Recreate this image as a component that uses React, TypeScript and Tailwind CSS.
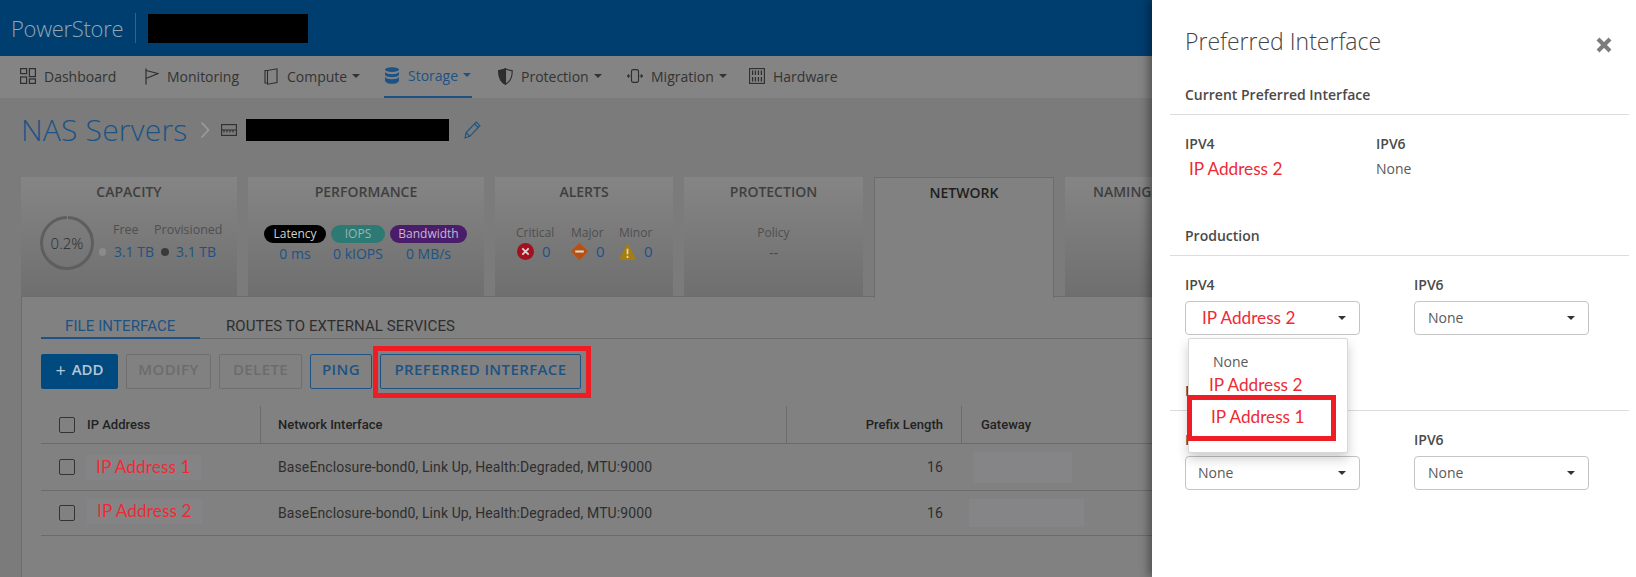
import React from "react";

const FieldLabel = ({ children }: { children: React.ReactNode }) => (
  <div className="mt-[19px] h-5 text-[14px] font-semibold leading-5 text-[#4a4a4a]">{children}</div>
);

const Caret = ({ className = "" }: { className?: string }) => (
  <span className={`inline-block h-0 w-0 border-x-[4px] border-t-[4px] border-x-transparent border-t-current ${className}`} />
);

const RedText = ({ children, className = "" }: { children: React.ReactNode; className?: string }) => (
  <span className={`font-['Lato',sans-serif] text-[17.2px] text-[#ee2a35] ${className}`}>{children}</span>
);

const SelectBox = ({ children, pad }: { children: React.ReactNode; pad: string }) => (
  <div className={`mt-[6px] flex h-[34px] w-[175px] items-center justify-between rounded-[4px] border border-[#c4c4c4] bg-white pr-[13px] text-[14px] text-[#5a5a5a] ${pad}`}>
    <span className="-mt-px">{children}</span>
    <Caret className="text-[#333]" />
  </div>
);

const SectionHead = ({ children, className = "" }: { children: React.ReactNode; className?: string }) => (
  <div className={`ml-[18px] mr-[7px] h-[30px] border-b border-[#dcdcdc] pl-[15px] text-[14px] font-semibold leading-5 text-[#4a4a4a] ${className}`}>
    {children}
  </div>
);

function DashIcon() {
  return (
    <svg width="16" height="16" viewBox="0 0 16 16" fill="none" stroke="#2e2e2e" strokeWidth="1.2">
      <rect x="0.6" y="0.6" width="6" height="5" />
      <rect x="9.4" y="0.6" width="6" height="8" />
      <rect x="0.6" y="9" width="6" height="6.4" />
      <rect x="9.4" y="11" width="6" height="4.4" />
    </svg>
  );
}

function FlagIcon() {
  return (
    <svg width="15" height="17" viewBox="0 0 15 17" fill="none" stroke="#2e2e2e" strokeWidth="1.2">
      <path d="M2 0.5V16.5" />
      <path d="M2 2.5L14 5.5L2 10.5" />
    </svg>
  );
}

function ComputeIcon() {
  return (
    <svg width="14" height="17" viewBox="0 0 14 17" fill="none" stroke="#2e2e2e" strokeWidth="1.1">
      <path d="M3.5 2.5L13 0.8V14.6L3.5 16.2Z" />
      <path d="M3.5 2.5H1V15H3.5" />
    </svg>
  );
}

function StorageIcon() {
  return (
    <svg width="14" height="17" viewBox="0 0 14 17" fill="#1c5384">
      <ellipse cx="7" cy="2.6" rx="7" ry="2.4" />
      <path d="M0 5C1 6.6 4 7.2 7 7.2S13 6.6 14 5V8C13 9.6 10 10.2 7 10.2S1 9.6 0 8Z" />
      <path d="M0 10C1 11.6 4 12.2 7 12.2S13 11.6 14 10V14C13 16 10 16.8 7 16.8S1 16 0 14Z" />
    </svg>
  );
}

function ShieldIcon() {
  return (
    <svg width="15" height="17" viewBox="0 0 15 17" stroke="#2e2e2e" strokeWidth="1.1">
      <path d="M7.5 0.8C9.5 2 12 2.6 14.2 2.6C14.4 9 12 13.8 7.5 16.2C3 13.8 0.6 9 0.8 2.6C3 2.6 5.5 2 7.5 0.8Z" fill="none" />
      <path d="M7.5 0.8C5.5 2 3 2.6 0.8 2.6C0.6 9 3 13.8 7.5 16.2Z" fill="#2e2e2e" />
    </svg>
  );
}

function MigrationIcon() {
  return (
    <svg width="16" height="14" viewBox="0 0 16 14" fill="none" stroke="#2e2e2e" strokeWidth="1.1">
      <path d="M4.5 2.5C4.5 1 5.5 0.6 6.5 0.6H9.5C10.5 0.6 11.5 1 11.5 2.5V11.5C11.5 13 10.5 13.4 9.5 13.4H6.5C5.5 13.4 4.5 13 4.5 11.5Z" />
      <path d="M0.5 7H3.5M2 5.4L0.5 7L2 8.6M12.5 7H15.5M14 5.4L15.5 7L14 8.6" />
    </svg>
  );
}

function HardwareIcon() {
  return (
    <svg width="16" height="16" viewBox="0 0 16 16" fill="none" stroke="#2e2e2e" strokeWidth="1.1">
      <rect x="0.6" y="0.6" width="14.8" height="14.8" />
      <path d="M3.6 2.5V7M6.4 2.5V7M9.4 2.5V7M12.4 2.5V7M3.6 9V13.5M6.4 9V13.5M9.4 9V13.5M12.4 9V13.5" strokeWidth="1.3" />
    </svg>
  );
}

const navItems = [
  { label: "Dashboard", icon: <DashIcon />, width: "w-[123px]" },
  { label: "Monitoring", icon: <FlagIcon />, width: "w-[120px]" },
  { label: "Compute", icon: <ComputeIcon />, width: "w-[121px]", caret: true },
  { label: "Storage", icon: <StorageIcon />, width: "w-[113px]", caret: true, active: true },
  { label: "Protection", icon: <ShieldIcon />, width: "w-[130px]", caret: true },
  { label: "Migration", icon: <MigrationIcon />, width: "w-[122px]", caret: true },
  { label: "Hardware", icon: <HardwareIcon />, width: "w-[100px]" },
];

const Card = ({ title, children, className = "" }: { title: string; children?: React.ReactNode; className?: string }) => (
  <div className={`h-[119px] shrink-0 bg-gradient-to-b from-[#858585] to-[#6f6f6f] pt-[5px] ${className}`}>
    <div className="h-5 whitespace-nowrap text-center text-[14px] font-semibold uppercase leading-5 text-[#3f3f3f]">{title}</div>
    {children}
  </div>
);

function Alert({ label, icon, className }: { label: string; icon: React.ReactNode; className: string }) {
  return (
    <div className={className}>
      <div className="h-5 text-[12px] leading-5 text-[#4f4f4f]">{label}</div>
      <div className="-mt-[2px] flex h-5 items-center gap-[8px] text-[15px] text-[#1c5384]">
        {icon}
        <span>0</span>
      </div>
    </div>
  );
}

const ActionButton = ({ children, width, disabled }: { children: React.ReactNode; width: string; disabled?: boolean }) => (
  <button
    className={`h-[35px] rounded-[2px] border pb-[4px] text-[15px] font-semibold tracking-[0.4px] ${width} ${
      disabled ? "border-[#6f6f6f] text-[#6c6c6c]" : "border-[#1c5384] text-[#1c5384]"
    }`}
  >
    {children}
  </button>
);

const CheckBox = () => <span className="block h-[16px] w-[16px] rounded-[2px] border border-[#333]" />;

const ipRow = "grid grid-cols-[220px_526px_175px_1fr] items-center border-b border-[#6b6b6b] font-['Roboto',sans-serif] text-[14px] tracking-[0.1px] text-[#2e2e2e]";

export default function App() {
  return (
    <div className="relative h-[577px] w-[1636px] overflow-hidden bg-[#7b7b7b] font-['Open_Sans',sans-serif]">
      {/* top bar */}
      <header className="flex h-14 items-center bg-[#003e6f] pl-[11px]">
        <span className="text-[22px] font-light leading-none tracking-[-0.3px] text-[#8fa5b4]">PowerStore</span>
        <span className="ml-3 h-[30px] w-px bg-[#33648c]" />
        <span className="ml-3 h-[29px] w-[160px] bg-black" />
      </header>

      <nav className="flex h-[42px] items-stretch bg-[#848484] pl-[20px] text-[14px] text-[#333]">
        {navItems.map((item) => (
          <div key={item.label} className={`flex ${item.width}`}>
            <div className={`flex items-center gap-2 pb-[2px] pr-px ${item.active ? "border-b-2 border-[#1c5384] text-[#1c5384]" : ""}`}>
              <span className="flex w-4 justify-center">{item.icon}</span>
              <span>{item.label}</span>
              {item.caret && <Caret className="-ml-[3px]" />}
            </div>
          </div>
        ))}
      </nav>

      {/* page title */}
      <div className="mt-3 flex h-10 items-center pl-[21px]">
        <h1 className="text-[30px] font-light leading-none tracking-[0.2px] text-[#1c5384]">NAS Servers</h1>
        <svg className="ml-[13px]" width="10" height="18" viewBox="0 0 10 18" fill="none" stroke="#9a9a9a" strokeWidth="1.8">
          <path d="M1.5 1.5L8.5 9L1.5 16.5" />
        </svg>
        <svg className="ml-[11px]" width="16" height="12" viewBox="0 0 16 12" fill="none" stroke="#2e2e2e" strokeWidth="1.1">
          <rect x="0.6" y="0.6" width="14.8" height="10.8" />
          <path d="M0.6 6H15.4M3 6V8.5M6 6V8.5M9 6V8.5M12 6V8.5" />
        </svg>
        <span className="ml-[9px] h-[22px] w-[203px] bg-black" />
        <svg className="ml-[15px]" width="17" height="18" viewBox="0 0 16 17" fill="none" stroke="#1c5384" strokeWidth="1.1">
          <path d="M1 16L2 11L11.5 1L15 4.5L5.5 14.5Z" />
          <path d="M2 11L5.5 14.5M10 3L13.5 6.5" />
        </svg>
      </div>

      {/* summary cards */}
      <div className="mt-[27px] flex h-[119px] gap-[11px] pl-[21px]">
        <Card title="Capacity" className="w-[216px]">
          <div className="mt-[14px] flex pl-[19px]">
            <div className="relative flex h-[54px] w-[54px] items-center justify-center">
              <svg className="absolute inset-0" width="54" height="54" viewBox="0 0 54 54" fill="none">
                <circle cx="27" cy="27" r="25.5" stroke="#5e5e5e" strokeWidth="3" strokeDasharray="158 2.2" transform="rotate(-88 27 27)" />
              </svg>
              <span className="text-[15px] font-light text-[#2a2a2a]">0.2%</span>
            </div>
            <div className="ml-[5px] flex text-[12.5px]">
              <div className="w-[55px]">
                <div className="ml-[14px] mt-[4px] h-5 leading-5 text-[#4f4f4f]">Free</div>
                <div className="mt-[1px] flex items-center gap-2">
                  <span className="h-2 w-2 rounded-full bg-[#8b8b8b]" />
                  <span className="whitespace-nowrap text-[14px] text-[#1c5384]">3.1 TB</span>
                </div>
              </div>
              <div>
                <div className="mt-[4px] h-5 leading-5 text-[#4f4f4f]">Provisioned</div>
                <div className="ml-[7px] mt-[1px] flex items-center gap-[7px]">
                  <span className="h-2 w-2 rounded-full bg-[#3a3a3a]" />
                  <span className="whitespace-nowrap text-[14px] text-[#1c5384]">3.1 TB</span>
                </div>
              </div>
            </div>
          </div>
        </Card>

        <Card title="Performance" className="w-[236px]">
          <div className="mt-[23px] flex gap-[5px] pl-4 text-center">
            <div className="w-[62px]">
              <div className="h-[18px] rounded-full bg-black text-[12px] leading-[18px] text-[#d0d0d0]">Latency</div>
              <div className="mt-px text-[14px] leading-5 text-[#1c5384]">0 ms</div>
            </div>
            <div className="w-[54px]">
              <div className="h-[18px] rounded-full bg-[#2c7a73] text-[12px] leading-[18px] text-[#9ab5b2]">IOPS</div>
              <div className="mt-px whitespace-nowrap text-[14px] leading-5 text-[#1c5384]">0 kIOPS</div>
            </div>
            <div className="w-[77px]">
              <div className="h-[18px] rounded-full bg-[#4a1d6b] text-[12px] leading-[18px] text-[#c6b6d2]">Bandwidth</div>
              <div className="mt-px text-[14px] leading-5 text-[#1c5384]">0 MB/s</div>
            </div>
          </div>
        </Card>

        <Card title="Alerts" className="w-[178px]">
          <div className="mt-[21px] flex pl-[21px]">
            <Alert
              label="Critical"
              className="w-[55px]"
              icon={
                <svg className="ml-[1px] shrink-0" width="17" height="17" viewBox="0 0 16 16">
                  <circle cx="8" cy="8" r="8" fill="#a5101f" />
                  <path d="M5 5L11 11M11 5L5 11" stroke="#d8d8d8" strokeWidth="1.7" />
                </svg>
              }
            />
            <Alert
              label="Major"
              className="w-[48px]"
              icon={
                <svg className="shrink-0" width="17" height="17" viewBox="0 0 16 16">
                  <path d="M8 0L16 8L8 16L0 8Z" fill="#b9500f" />
                  <path d="M4 8H12" stroke="#d8d8d8" strokeWidth="2" />
                </svg>
              }
            />
            <Alert
              label="Minor"
              className="w-[48px]"
              icon={
                <svg className="shrink-0" width="17" height="17" viewBox="0 0 16 16">
                  <path d="M8 0L16 16H0Z" fill="#a87e0a" />
                  <path d="M8 5.5V10.5M8 12V14" stroke="#d8d8d8" strokeWidth="1.6" />
                </svg>
              }
            />
          </div>
        </Card>

        <Card title="Protection" className="w-[179px]">
          <div className="mt-[21px] text-center">
            <div className="h-5 text-[12px] leading-5 text-[#4f4f4f]">Policy</div>
            <div className="h-5 text-[14px] leading-5 text-[#1c5384]">--</div>
          </div>
        </Card>

        <div className="relative z-10 h-[121px] w-[180px] shrink-0 border-x border-t border-[#6d6d6d] bg-[#818181] pt-[5px]">
          <div className="h-5 text-center text-[14px] font-semibold uppercase leading-5 text-[#1e1e1e]">Network</div>
        </div>

        <Card title="Naming Services" className="w-[180px]" />
      </div>

      {/* network section */}
      <section className="ml-[21px] h-[281px] border-l border-t border-[#6d6d6d] bg-[#818181] pl-[19px]">
        <div className="flex h-[42px] border-b border-[#6b6b6b] font-['Roboto',sans-serif] text-[15px] leading-5 tracking-[0.1px]">
          <div className="-mb-px w-[159px] border-b-2 border-[#1c5384] pl-6 pt-[19px] text-[#1c5384]">FILE INTERFACE</div>
          <div className="ml-[26px] pt-[19px] text-[#2e2e2e]">ROUTES TO EXTERNAL SERVICES</div>
        </div>

        <div className="mt-[15px] flex gap-2">
          <button className="flex h-[35px] w-[77px] items-center justify-center gap-[6px] rounded-[2px] bg-[#004a80] pb-[4px] text-[15px] font-semibold text-[#b7c6d2]">
            <span className="text-[18px] font-normal leading-none">+</span> ADD
          </button>
          <ActionButton width="w-[85px]" disabled>MODIFY</ActionButton>
          <ActionButton width="w-[83px]" disabled>DELETE</ActionButton>
          <ActionButton width="w-[62px]">PING</ActionButton>
          <ActionButton width="w-[201px]">PREFERRED INTERFACE</ActionButton>
        </div>

        <div className="mt-[17px]">
          <div className="grid h-[38px] grid-cols-[220px_526px_175px_1fr] border-b border-[#6b6b6b] font-['Roboto',sans-serif] text-[13px] font-medium text-[#222]">
            <div className="flex items-center gap-3 border-r border-[#6b6b6b] pl-[18px]">
              <CheckBox />
              <span>IP Address</span>
            </div>
            <div className="flex items-center border-r border-[#6b6b6b] pl-[17px]">Network Interface</div>
            <div className="flex items-center justify-end border-r border-[#6b6b6b] pr-[18px]">Prefix Length</div>
            <div className="flex items-center pl-[19px]">Gateway</div>
          </div>

          <div className={`${ipRow} h-[47px]`}>
            <div className="flex items-center pl-[18px]">
              <CheckBox />
              <span className="ml-[11px] bg-[#848486] px-[10px] leading-[23px]">
                <RedText>IP Address 1</RedText>
              </span>
            </div>
            <div className="pl-[17px]">BaseEnclosure-bond0, Link Up, Health:Degraded, MTU:9000</div>
            <div className="pr-[19px] text-right">16</div>
            <div className="pl-[11px]">
              <div className="h-[31px] w-[99px] bg-[#858588]" />
            </div>
          </div>
          <div className={`${ipRow} h-[45px]`}>
            <div className="flex items-center pl-[18px]">
              <CheckBox />
              <span className="mb-[3px] ml-[12px] bg-[#848486] px-[10px] leading-[23px]">
                <RedText>IP Address 2</RedText>
              </span>
            </div>
            <div className="pl-[17px]">BaseEnclosure-bond0, Link Up, Health:Degraded, MTU:9000</div>
            <div className="pr-[19px] text-right">16</div>
            <div className="pl-[7px]">
              <div className="h-[28px] w-[115px] bg-[#858588]" />
            </div>
          </div>
        </div>
      </section>

      {/* annotation over the button */}
      <div className="absolute left-[373px] top-[346px] h-[52px] w-[218px] border-[5px] border-[#ee1c25]" />

      {/* preferred interface drawer */}
      <aside className="absolute bottom-0 left-[1152px] top-0 w-[484px] bg-white shadow-[-4px_0_8px_rgba(0,0,0,0.35)]">
        <h2 className="pl-[33px] pt-[26px] text-[23px] font-light leading-[30px] text-[#444]">Preferred Interface</h2>
        <svg className="absolute left-[444px] top-[37px]" width="16" height="16" viewBox="0 0 16 16" fill="none" stroke="#7c7c7c" strokeWidth="4">
          <path d="M2 2L14 14M14 2L2 14" />
        </svg>

        <SectionHead className="mt-[29px]">Current Preferred Interface</SectionHead>
        <div className="grid grid-cols-[191px_1fr] pl-[33px]">
          <FieldLabel>IPV4</FieldLabel>
          <FieldLabel>IPV6</FieldLabel>
          <div className="mt-[3px] h-6 pl-1 leading-6">
            <RedText>IP Address 2</RedText>
          </div>
          <div className="mt-[3px] h-6 text-[14px] leading-6 text-[#5a5a5a]">None</div>
        </div>

        <SectionHead className="mt-[45px]">Production</SectionHead>
        <div className="grid grid-cols-[229px_1fr] pl-[33px]">
          <FieldLabel>IPV4</FieldLabel>
          <FieldLabel>IPV6</FieldLabel>
          <SelectBox pad="pl-4"><RedText>IP Address 2</RedText></SelectBox>
          <SelectBox pad="pl-[13px]">None</SelectBox>
        </div>

        <SectionHead className="mt-[46px]">File</SectionHead>
        <div className="grid grid-cols-[229px_1fr] pl-[33px]">
          <FieldLabel>IPV4</FieldLabel>
          <FieldLabel>IPV6</FieldLabel>
          <SelectBox pad="pl-[12px]">None</SelectBox>
          <SelectBox pad="pl-[13px]">None</SelectBox>
        </div>

        {/* open dropdown */}
        <div className="absolute left-[36px] top-[338px] h-[115px] w-[160px] rounded-[2px] border border-[#d8d8d8] bg-white pt-[12px] shadow-[0_6px_12px_rgba(0,0,0,0.2)]">
          <div className="h-[22px] pl-6 text-[14px] leading-[22px] text-[#5a5a5a]">None</div>
          <div className="h-6 pl-5 leading-6">
            <RedText>IP Address 2</RedText>
          </div>
          <div className="mt-2 h-6 pl-[22px] leading-6">
            <RedText>IP Address 1</RedText>
          </div>
        </div>
        <div className="absolute left-[35px] top-[395px] h-[46px] w-[149px] border-[5px] border-[#ee1c25]" />
      </aside>
    </div>
  );
}
